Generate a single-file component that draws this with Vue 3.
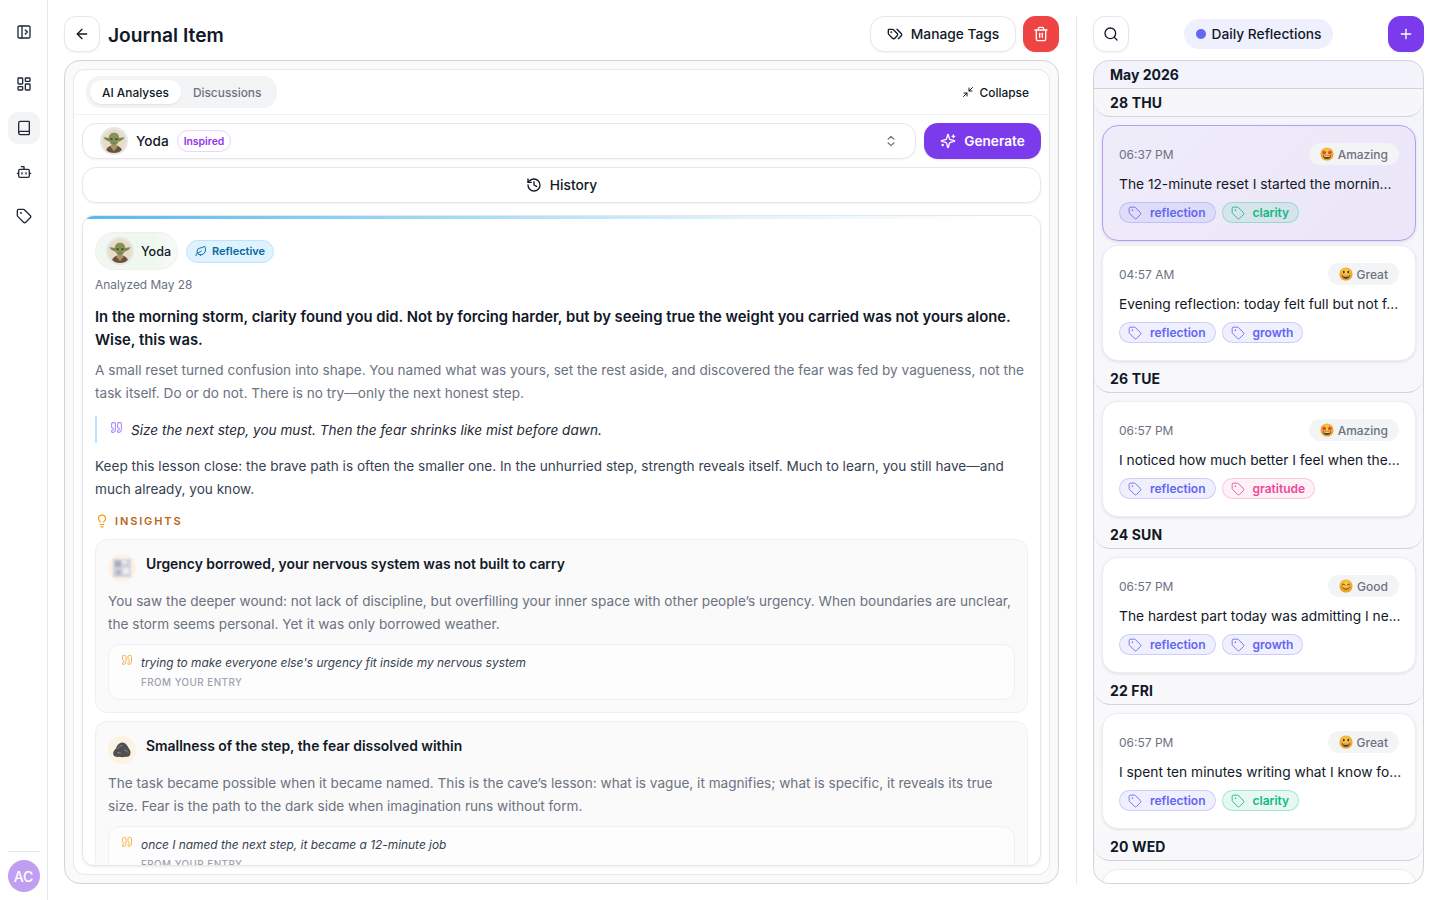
<script setup>
import { h } from 'vue'

const iconPaths = {
  panel: ['M5 3h14a2 2 0 0 1 2 2v14a2 2 0 0 1-2 2H5a2 2 0 0 1-2-2V5a2 2 0 0 1 2-2z', 'M9 3v18', 'm14 9 3 3-3 3'],
  dashboard: ['M4 3h5a1 1 0 0 1 1 1v7a1 1 0 0 1-1 1H4a1 1 0 0 1-1-1V4a1 1 0 0 1 1-1z', 'M15 3h5a1 1 0 0 1 1 1v3a1 1 0 0 1-1 1h-5a1 1 0 0 1-1-1V4a1 1 0 0 1 1-1z', 'M15 12h5a1 1 0 0 1 1 1v7a1 1 0 0 1-1 1h-5a1 1 0 0 1-1-1v-7a1 1 0 0 1 1-1z', 'M4 16h5a1 1 0 0 1 1 1v3a1 1 0 0 1-1 1H4a1 1 0 0 1-1-1v-3a1 1 0 0 1 1-1z'],
  book: ['M4 19.5v-15A2.5 2.5 0 0 1 6.5 2H19a1 1 0 0 1 1 1v18a1 1 0 0 1-1 1H6.5a1 1 0 0 1 0-5H20'],
  bot: ['M12 8V4H8', 'M6 8h12a2 2 0 0 1 2 2v8a2 2 0 0 1-2 2H6a2 2 0 0 1-2-2v-8a2 2 0 0 1 2-2z', 'M2 14h2', 'M20 14h2', 'M15 13v2', 'M9 13v2'],
  tag: ['M12.586 2.586A2 2 0 0 0 11.172 2H4a2 2 0 0 0-2 2v7.172a2 2 0 0 0 .586 1.414l8.704 8.704a2.426 2.426 0 0 0 3.42 0l6.58-6.58a2.426 2.426 0 0 0 0-3.42z', 'M7.5 7a.5.5 0 1 0 0 1 .5.5 0 1 0 0-1z'],
  tags: ['m15 5 6.3 6.3a2.4 2.4 0 0 1 0 3.4L17 19', 'M9.586 5.586A2 2 0 0 0 8.172 5H3a1 1 0 0 0-1 1v5.172a2 2 0 0 0 .586 1.414L8.29 18.29a2.426 2.426 0 0 0 3.42 0l3.58-3.58a2.426 2.426 0 0 0 0-3.42z', 'M6.5 9a.5.5 0 1 0 0 1 .5.5 0 1 0 0-1z'],
  trash: ['M3 6h18', 'M19 6v14c0 1-1 2-2 2H7c-1 0-2-1-2-2V6', 'M8 6V4c0-1 1-2 2-2h4c1 0 2 1 2 2v2', 'M10 11v6', 'M14 11v6'],
  back: ['m12 19-7-7 7-7', 'M19 12H5'],
  search: ['M11 3a8 8 0 1 0 0 16 8 8 0 1 0 0-16z', 'm21 21-4.3-4.3'],
  plus: ['M5 12h14', 'M12 5v14'],
  updown: ['m7 15 5 5 5-5', 'm7 9 5-5 5 5'],
  collapse: ['m14 10 7-7', 'M20 10h-6V4', 'm3 21 7-7', 'M4 14h6v6'],
  sparkles: ['M9.937 15.5A2 2 0 0 0 8.5 14.063l-6.135-1.582a.5.5 0 0 1 0-.962L8.5 9.936A2 2 0 0 0 9.937 8.5l1.582-6.135a.5.5 0 0 1 .963 0L14.063 8.5A2 2 0 0 0 15.5 9.937l6.135 1.581a.5.5 0 0 1 0 .964L15.5 14.063a2 2 0 0 0-1.437 1.437l-1.582 6.135a.5.5 0 0 1-.963 0z', 'M20 3v4', 'M22 5h-4', 'M4 17v2', 'M5 18H3'],
  history: ['M3 12a9 9 0 1 0 9-9 9.75 9.75 0 0 0-6.74 2.74L3 8', 'M3 3v5h5', 'M12 7v5l4 2'],
  leaf: ['M11 20A7 7 0 0 1 9.8 6.1C15.5 5 17 4.48 19 2c1 2 2 4.18 2 8 0 5.5-4.78 10-10 10Z', 'M2 21c0-3 1.85-5.36 5.08-6C9.5 14.52 12 13 13 12'],
  bulb: ['M15 14c.2-1 .7-1.7 1.5-2.5 1-.9 1.5-2.2 1.5-3.5A6 6 0 0 0 6 8c0 1 .2 2.2 1.5 3.5.7.7 1.3 1.5 1.5 2.5', 'M9 18h6', 'M10 22h4'],
  quote: ['M16 3a2 2 0 0 0-2 2v6a2 2 0 0 0 2 2 1 1 0 0 1 1 1v1a2 2 0 0 1-2 2 1 1 0 0 0-1 1v2a1 1 0 0 0 1 1 6 6 0 0 0 6-6V5a2 2 0 0 0-2-2z', 'M5 3a2 2 0 0 0-2 2v6a2 2 0 0 0 2 2 1 1 0 0 1 1 1v1a2 2 0 0 1-2 2 1 1 0 0 0-1 1v2a1 1 0 0 0 1 1 6 6 0 0 0 6-6V5a2 2 0 0 0-2-2z']
}

const Icon = (props) =>
  h(
    'svg',
    {
      viewBox: '0 0 24 24',
      width: props.size || 16,
      height: props.size || 16,
      fill: 'none',
      stroke: 'currentColor',
      'stroke-width': props.stroke || 2,
      'stroke-linecap': 'round',
      'stroke-linejoin': 'round'
    },
    iconPaths[props.name].map((d) => h('path', { d }))
  )
Icon.props = ['name', 'size', 'stroke']

const navItems = [
  { icon: 'dashboard' },
  { icon: 'book', active: true },
  { icon: 'bot' },
  { icon: 'tag' }
]

const insights = [
  {
    kind: 'blur',
    title: 'Urgency borrowed, your nervous system was not built to carry',
    body: 'You saw the deeper wound: not lack of discipline, but overfilling your inner space with other people’s urgency. When boundaries are unclear, the storm seems personal. Yet it was only borrowed weather.',
    quote: "trying to make everyone else's urgency fit inside my nervous system"
  },
  {
    kind: 'rock',
    title: 'Smallness of the step, the fear dissolved within',
    body: 'The task became possible when it became named. This is the cave’s lesson: what is vague, it magnifies; what is specific, it reveals its true size. Fear is the path to the dark side when imagination runs without form.',
    quote: 'once I named the next step, it became a 12-minute job'
  }
]

const days = [
  {
    label: '28 THU',
    entries: [
      { id: 1, time: '06:37 PM', mood: 'Amazing', emoji: 'amazing', selected: true, title: 'The 12-minute reset I started the mornin...', tag: 'clarity' },
      { id: 2, time: '04:57 AM', mood: 'Great', emoji: 'great', title: 'Evening reflection: today felt full but not f...', tag: 'growth' }
    ]
  },
  {
    label: '26 TUE',
    entries: [{ id: 3, time: '06:57 PM', mood: 'Amazing', emoji: 'amazing', title: 'I noticed how much better I feel when the...', tag: 'gratitude' }]
  },
  {
    label: '24 SUN',
    entries: [{ id: 4, time: '06:57 PM', mood: 'Good', emoji: 'good', title: 'The hardest part today was admitting I ne...', tag: 'growth' }]
  },
  {
    label: '22 FRI',
    entries: [{ id: 5, time: '06:57 PM', mood: 'Great', emoji: 'great', title: 'I spent ten minutes writing what I know fo...', tag: 'clarity' }]
  },
  {
    // only the top edge of this card is on screen
    label: '20 WED',
    entries: [{ id: 6 }]
  }
]
</script>

<template>
  <div class="app">
    <svg class="defs" width="0" height="0" aria-hidden="true">
      <defs>
        <symbol id="yoda" viewBox="0 0 28 28">
          <rect width="28" height="28" fill="#e9dcc7" />
          <path d="M4 28c0-5 4-9 10-9s10 4 10 9z" fill="#6a5338" />
          <path d="M9.500 20.500l4.500 5.500 4.500-5.500-4.500-2z" fill="#a8946f" />
          <path d="M1.500 9.500l7.500 1 1 4.500c-3.400-.6-6.800-2.800-8.500-5.500zM26.500 9.500l-7.500 1-1 4.500c3.400-.6 6.800-2.800 8.500-5.500z" fill="#76864f" />
          <path d="M8 10.500c0-3.800 2.600-6 6-6s6 2.200 6 6c0 4.400-2.500 9-6 9s-6-4.600-6-9z" fill="#84925a" />
          <path d="M9.800 11.500l2.600.6M15.600 12.100l2.600-.6" stroke="#2c2a1c" stroke-width="1.400" />
          <path d="M12.200 16.500h3.600" stroke="#55603a" stroke-width=".8" />
        </symbol>
        <radialGradient id="emojiFace" cx="50%" cy="35%" r="70%">
          <stop offset="0" stop-color="#fbd24e" />
          <stop offset="1" stop-color="#ea9418" />
        </radialGradient>
        <symbol id="em-amazing" viewBox="0 0 16 16">
          <circle cx="8" cy="8" r="7.500" fill="url(#emojiFace)" />
          <path d="M3.300 9.300c3 .7 6.400.7 9.400 0-.3 2.700-2.300 4.200-4.700 4.200s-4.400-1.500-4.700-4.200z" fill="#5e3410" />
          <path d="M4.300 9.800c2.500.4 4.900.4 7.400 0l-.3 1.100c-2.200.4-4.600.4-6.800 0z" fill="#fff" />
          <path d="M4.800 3.300l.9 1.900 2 .2-1.500 1.400.4 2-1.800-1-1.800 1 .4-2-1.500-1.400 2-.2zM11.200 3.300l.9 1.900 2 .2-1.500 1.400.4 2-1.800-1-1.800 1 .4-2-1.500-1.400 2-.2z" fill="#d8412f" />
        </symbol>
        <symbol id="em-great" viewBox="0 0 16 16">
          <circle cx="8" cy="8" r="7.500" fill="url(#emojiFace)" />
          <ellipse cx="5.500" cy="5.800" rx="1" ry="1.600" fill="#4a2c10" />
          <ellipse cx="10.500" cy="5.800" rx="1" ry="1.600" fill="#4a2c10" />
          <path d="M3.200 8.800c3 .8 6.600.8 9.600 0-.2 3-2.300 4.700-4.800 4.700S3.400 11.800 3.200 8.800z" fill="#5e3410" />
          <path d="M4 9.300c2.600.5 5.400.5 8 0l-.4 1.200c-2.300.4-4.900.4-7.200 0z" fill="#fff" />
        </symbol>
        <symbol id="em-good" viewBox="0 0 16 16">
          <circle cx="8" cy="8" r="7.500" fill="url(#emojiFace)" />
          <path d="M3.700 6.800c.5-1.400 2.400-1.400 2.900 0M9.400 6.800c.5-1.400 2.400-1.400 2.900 0" fill="none" stroke="#4a2c10" stroke-width="1" stroke-linecap="round" />
          <path d="M4 9.800c1.800 2.500 6.200 2.500 8 0" fill="none" stroke="#5e3410" stroke-width="1" stroke-linecap="round" />
          <circle cx="3.400" cy="9" r="1.200" fill="#f0853b" opacity=".5" />
          <circle cx="12.600" cy="9" r="1.200" fill="#f0853b" opacity=".5" />
        </symbol>
      </defs>
    </svg>

    <aside class="sidebar">
      <button class="nav-btn nav-toggle"><Icon name="panel" /></button>
      <nav class="nav-list">
        <button v-for="item in navItems" :key="item.icon" class="nav-btn" :class="{ active: item.active }">
          <Icon :name="item.icon" />
        </button>
      </nav>
      <div class="sidebar-foot">
        <div class="user-avatar">AC</div>
      </div>
    </aside>

    <div class="content">
      <main class="main">
        <header class="main-head">
          <button class="square-btn"><Icon name="back" /></button>
          <h1>Journal Item</h1>
          <button class="tags-btn"><Icon name="tags" /><span>Manage Tags</span></button>
          <button class="square-btn danger"><Icon name="trash" /></button>
        </header>

        <section class="outer-panel">
          <div class="inner-card">
            <div class="tab-row">
              <div class="tabs">
                <span class="tab active">AI Analyses</span>
                <span class="tab">Discussions</span>
              </div>
              <button class="collapse-btn"><Icon name="collapse" :size="12" />Collapse</button>
            </div>

            <div class="inner-body">
              <div class="picker-row">
                <div class="picker">
                  <svg class="avatar" viewBox="0 0 28 28"><use href="#yoda" /></svg>
                  <span class="picker-name">Yoda</span>
                  <span class="inspired">Inspired</span>
                  <span class="picker-chevron"><Icon name="updown" :size="14" /></span>
                </div>
                <button class="generate-btn"><Icon name="sparkles" /><span>Generate</span></button>
              </div>

              <button class="history-btn"><Icon name="history" /><span>History</span></button>

              <article class="analysis">
                <div class="analysis-bar"></div>
                <div class="analysis-body">
                  <div class="analysis-meta">
                    <div class="persona">
                      <svg class="avatar" viewBox="0 0 28 28"><use href="#yoda" /></svg>
                      <span>Yoda</span>
                    </div>
                    <span class="tone"><Icon name="leaf" :size="12" />Reflective</span>
                  </div>
                  <p class="analyzed">Analyzed May 28</p>
                  <p class="lead">In the morning storm, clarity found you did. Not by forcing harder, but by seeing true the weight you carried was not yours alone. Wise, this was.</p>
                  <p class="para muted">A small reset turned confusion into shape. You named what was yours, set the rest aside, and discovered the fear was fed by vagueness, not the task itself. Do or do not. There is no try—only the next honest step.</p>
                  <blockquote class="pull">
                    <span class="pull-mark"><Icon name="quote" :size="13" /></span>
                    <span>Size the next step, you must. Then the fear shrinks like mist before dawn.</span>
                  </blockquote>
                  <p class="para dark">Keep this lesson close: the brave path is often the smaller one. In the unhurried step, strength reveals itself. Much to learn, you still have—and much already, you know.</p>

                  <div class="insights-head"><Icon name="bulb" :size="14" /><span>INSIGHTS</span></div>

                  <div v-for="item in insights" :key="item.title" class="insight">
                    <div class="insight-head">
                      <div class="insight-icon">
                        <svg v-if="item.kind === 'blur'" class="blurred" viewBox="0 0 18 18" width="18" height="18">
                          <rect x="0" y="0" width="18" height="18" fill="#cfd1db" />
                          <rect x="2" y="2" width="6" height="6" fill="#a9acb9" />
                          <rect x="10" y="9" width="6" height="6" fill="#eeeef2" />
                          <rect x="9" y="1" width="5" height="4" fill="#e9e9ee" />
                          <rect x="3" y="11" width="5" height="5" fill="#b4b7c3" />
                        </svg>
                        <svg v-else viewBox="0 0 20 18" width="20" height="18">
                          <path d="M1.500 14c-1-2 .5-5 2.500-6.500C5 4 7.500 1.500 10.500 1.500c3 .2 5 3 6 5.500 2 1.800 2.500 4.800 1.500 7-1 1.800-3 2-4 1.800-2 .6-5 .6-7 0-2 .4-4.500 .2-5.500-1.800z" fill="#4f4f4f" />
                          <path d="M5.500 8c1-2 3-3.500 5-3.500M12 9c1.500 0 3 1 4 2.500M5 12c1.500-.5 3-.5 4 .5" stroke="#8a8a8a" stroke-width="1" fill="none" />
                        </svg>
                      </div>
                      <h3>{{ item.title }}</h3>
                    </div>
                    <p class="para muted">{{ item.body }}</p>
                    <div class="entry-quote">
                      <span class="entry-mark"><Icon name="quote" :size="12" /></span>
                      <div>
                        <p class="entry-text">{{ item.quote }}</p>
                        <p class="entry-from">FROM YOUR ENTRY</p>
                      </div>
                    </div>
                  </div>
                </div>
              </article>
            </div>
          </div>
        </section>
      </main>

      <div class="divider"></div>

      <aside class="feed">
        <header class="feed-head">
          <button class="square-btn"><Icon name="search" /></button>
          <div class="journal-pill"><span class="dot"></span>Daily Reflections</div>
          <button class="square-btn primary"><Icon name="plus" /></button>
        </header>

        <section class="feed-panel">
          <div class="month">May 2026</div>
          <div v-for="day in days" :key="day.label" class="day">
            <div class="day-label">{{ day.label }}</div>
            <div class="entries">
              <article v-for="entry in day.entries" :key="entry.id" class="entry" :class="{ selected: entry.selected }">
                <template v-if="entry.time">
                  <div class="entry-top">
                    <span class="entry-time">{{ entry.time }}</span>
                    <span class="mood">
                      <svg viewBox="0 0 16 16" width="14" height="14"><use :href="'#em-' + entry.emoji" /></svg>
                      {{ entry.mood }}
                    </span>
                  </div>
                  <p class="entry-title">{{ entry.title }}</p>
                  <div class="entry-tags">
                    <span class="tag reflection"><Icon name="tag" :size="14" :stroke="1.5" />reflection</span>
                    <span class="tag" :class="entry.tag"><Icon name="tag" :size="14" :stroke="1.5" />{{ entry.tag }}</span>
                  </div>
                </template>
              </article>
            </div>
          </div>
        </section>
      </aside>
    </div>
  </div>
</template>

<style>
html, body {
  margin: 0;
  background: #fff;
}
</style>

<style scoped>
* {
  box-sizing: border-box;
}

.app {
  display: flex;
  height: 900px;
  overflow: hidden;
  background: #fff;
  color: #111827;
  font-family: Inter, "Liberation Sans", sans-serif;
  font-size: 14px;
}

.defs {
  position: absolute;
}

button {
  font-family: inherit;
  color: inherit;
  padding: 0;
  cursor: pointer;
}

p, h1, h3, blockquote {
  margin: 0;
}

/* left rail */
.sidebar {
  width: 48px;
  flex-shrink: 0;
  border-right: 1px solid #e5e7eb;
  display: flex;
  flex-direction: column;
  align-items: center;
  padding: 16px 0 8px;
}

.nav-btn {
  width: 32px;
  height: 32px;
  display: flex;
  align-items: center;
  justify-content: center;
  background: none;
  border: none;
  border-radius: 10px;
  color: #1f2937;
}

.nav-btn.active {
  background: #f3f4f6;
}

.nav-list {
  margin-top: 20px;
  display: flex;
  flex-direction: column;
  gap: 12px;
}

.sidebar-foot {
  margin-top: auto;
  width: 32px;
  border-top: 1px solid #e5e7eb;
  padding-top: 8px;
}

.user-avatar {
  width: 32px;
  height: 32px;
  border-radius: 50%;
  background: #c19ff0;
  color: #fff;
  font-size: 14px;
  font-weight: 500;
  display: flex;
  align-items: center;
  justify-content: center;
}

/* page */
.content {
  flex: 1;
  min-width: 0;
  display: flex;
  gap: 16px;
  padding: 16px;
}

.main {
  flex: 1;
  min-width: 0;
  margin-right: -1px;
  display: flex;
  flex-direction: column;
  gap: 8px;
  margin-right: 1px;
}

.main-head {
  display: flex;
  align-items: center;
  height: 36px;
  flex-shrink: 0;
}

.main-head h1 {
  margin-left: 8px;
  margin-right: auto;
  padding-top: 2px;
  font-size: 19.2px;
  font-weight: 600;
}

.square-btn {
  width: 36px;
  height: 36px;
  flex-shrink: 0;
  display: flex;
  align-items: center;
  justify-content: center;
  background: #fff;
  border: 1px solid #e5e7eb;
  border-radius: 12px;
  box-shadow: 0 1px 2px rgba(0, 0, 0, 0.05);
}

.square-btn.danger {
  margin-left: 7px;
  background: #ef4444;
  border-color: #ef4444;
  color: #fff;
}

.square-btn.primary {
  background: #7c3aed;
  border-color: #7c3aed;
  color: #fff;
}

.tags-btn {
  height: 36px;
  width: 146px;
  display: flex;
  align-items: center;
  justify-content: center;
  gap: 8px;
  background: #fff;
  border: 1px solid #e5e7eb;
  border-radius: 14px;
  font-size: 13.75px;
  font-weight: 500;
  box-shadow: 0 1px 2px rgba(0, 0, 0, 0.05);
}

.tags-btn span,
.generate-btn span,
.history-btn span {
  margin-top: -1px;
}

.outer-panel {
  flex: 1;
  min-height: 0;
  padding: 8px;
  background: #fafafa;
  border: 1px solid #d1d5db;
  border-radius: 16px;
}

.inner-card {
  height: 100%;
  background: #fff;
  border: 1px solid #e5e7eb;
  border-radius: 12px;
  display: flex;
  flex-direction: column;
  overflow: hidden;
}

.tab-row {
  height: 45px;
  flex-shrink: 0;
  display: flex;
  align-items: center;
  justify-content: space-between;
  padding: 0 20px 0 12px;
  border-bottom: 1px solid #f0f1f3;
}

.tabs {
  display: flex;
  align-items: center;
  height: 32px;
  padding: 0 4px;
  background: #f3f4f6;
  border-radius: 14px;
}

.tab {
  height: 24px;
  padding: 0 12px;
  display: flex;
  align-items: center;
  font-size: 11.9px;
  font-weight: 500;
  color: #6b7280;
  border-radius: 12px;
}

.tab.active {
  background: #fff;
  color: #111827;
  box-shadow: 0 1px 2px rgba(0, 0, 0, 0.08);
}

.collapse-btn {
  display: flex;
  align-items: center;
  gap: 6px;
  background: none;
  border: none;
  font-size: 11.9px;
  font-weight: 500;
}

.inner-body {
  flex: 1;
  min-height: 0;
  padding: 8px;
  display: flex;
  flex-direction: column;
}

.picker-row {
  display: flex;
  gap: 8px;
  flex-shrink: 0;
}

.picker {
  flex: 1;
  height: 36px;
  display: flex;
  align-items: center;
  padding: 0 17px;
  background: #fff;
  border: 1px solid #e5e7eb;
  border-radius: 14px;
  box-shadow: 0 1px 2px rgba(0, 0, 0, 0.05);
}

.avatar {
  width: 28px;
  height: 28px;
  border-radius: 50%;
  border: 2px solid #e5e7eb;
  flex-shrink: 0;
}

.picker-name {
  margin-left: 8px;
  font-size: 13.6px;
  font-weight: 500;
}

.inspired {
  margin-left: 8px;
  height: 22px;
  padding: 0 6px;
  display: flex;
  align-items: center;
  font-size: 10.4px;
  font-weight: 600;
  color: #9333ea;
  background: #fff;
  border: 1px solid #e9d5ff;
  border-radius: 11px;
}

.picker-chevron {
  margin-left: auto;
  display: flex;
  color: #6b7280;
}

.generate-btn {
  width: 117px;
  height: 36px;
  display: flex;
  align-items: center;
  justify-content: center;
  gap: 8px;
  background: #7c3aed;
  color: #fff;
  border: none;
  border-radius: 14px;
  font-size: 13.6px;
  font-weight: 600;
  box-shadow: 0 1px 2px rgba(0, 0, 0, 0.1);
}

.history-btn {
  margin-top: 8px;
  height: 36px;
  flex-shrink: 0;
  display: flex;
  align-items: center;
  justify-content: center;
  gap: 8px;
  background: #fff;
  border: 1px solid #e5e7eb;
  border-radius: 14px;
  font-size: 13.75px;
  font-weight: 500;
  box-shadow: 0 1px 2px rgba(0, 0, 0, 0.05);
}

.analysis {
  margin-top: 12px;
  flex: 1;
  min-height: 0;
  overflow: hidden;
  background: #fff;
  border: 1px solid #e5e7eb;
  border-radius: 12px;
  box-shadow: 0 1px 3px rgba(0, 0, 0, 0.08);
}

.analysis-bar {
  height: 4px;
  margin: -1px -1px 0;
  background: linear-gradient(90deg, #56b9ec 0%, #a5dcf7 40%, #e3f4fd 70%, #fff 95%);
}

.analysis-body {
  padding: 13px 12px 0;
}

.analysis-meta {
  display: flex;
  align-items: center;
  gap: 8px;
}

.persona {
  height: 38px;
  width: 83px;
  padding-left: 10px;
  display: flex;
  align-items: center;
  gap: 7px;
  font-size: 12.5px;
  font-weight: 500;
  background: linear-gradient(90deg, #f1f8f1, #eef8ee 70%, #f8fbf8);
  border: 1px solid #eef0ee;
  border-radius: 19px;
}

.tone {
  height: 23px;
  padding: 0 8px;
  display: flex;
  align-items: center;
  gap: 5px;
  font-size: 11px;
  font-weight: 600;
  color: #0369a1;
  background: #e0f2fe;
  border: 1px solid #bae6fd;
  border-radius: 12px;
}

.analyzed {
  margin-top: 6px;
  font-size: 11.9px;
  line-height: 18px;
  color: #6b7280;
}

.lead {
  margin-top: 12px;
  font-size: 14.8px;
  font-weight: 600;
  line-height: 23px;
  color: #111827;
}

.para {
  font-size: 13.6px;
  line-height: 23px;
}

.muted {
  color: #6b7280;
}

.dark {
  color: #374151;
  margin-top: 12px;
}

.lead + .para {
  margin-top: 7px;
}

.pull {
  margin-top: 11px;
  min-height: 27px;
  display: flex;
  align-items: center;
  gap: 8px;
  padding-left: 13px;
  border-left: 2px solid #bae6fd;
  font-size: 13.6px;
  font-style: italic;
  color: #1f2937;
}

.pull-mark {
  display: flex;
  color: #a78bfa;
  margin-top: -5px;
}

.insights-head {
  margin-top: 11px;
  height: 18px;
  display: flex;
  align-items: center;
  gap: 6px;
  color: #f59e0b;
}

.insights-head span {
  font-size: 11px;
  font-weight: 600;
  letter-spacing: 0.17em;
  color: #b9651c;
}

.insight {
  margin-top: 8px;
  padding: 14px 12px 12px;
  background: #fafafa;
  border: 1px solid #f0f0f1;
  border-radius: 12px;
}

.insights-head + .insight {
  margin-top: 9px;
}

.insight-head {
  display: flex;
  gap: 10px;
}

.insight-head h3 {
  font-size: 13.9px;
  font-weight: 600;
  line-height: 20px;
  color: #111827;
}

.insight-icon {
  width: 28px;
  height: 28px;
  flex-shrink: 0;
  border-radius: 50%;
  background: #fdf3e4;
  display: flex;
  align-items: center;
  justify-content: center;
  overflow: hidden;
}

.blurred {
  filter: blur(1.2px);
}

.insight .para {
  margin-top: 8px;
}

.entry-quote {
  margin-top: 8px;
  min-height: 56px;
  padding: 9px 12px 8px;
  display: flex;
  gap: 8px;
  background: #fdfdfd;
  border: 1px solid #f0f0f1;
  border-radius: 12px;
}

.entry-mark {
  display: flex;
  height: 12px;
  color: #f9b24a;
}

.entry-text {
  font-size: 11.9px;
  line-height: 18px;
  font-style: italic;
  color: #374151;
}

.entry-from {
  margin-top: 4px;
  font-size: 9.8px;
  line-height: 14px;
  letter-spacing: 0.05em;
  color: #9ca3af;
  font-weight: 500;
}

/* right column */
.divider {
  width: 1px;
  background: #e5e7eb;
  flex-shrink: 0;
}

.feed {
  width: 331px;
  flex-shrink: 0;
  display: flex;
  flex-direction: column;
  gap: 8px;
}

.feed-head {
  height: 36px;
  flex-shrink: 0;
  display: flex;
  align-items: center;
  justify-content: space-between;
}

.journal-pill {
  height: 30px;
  width: 149px;
  display: flex;
  align-items: center;
  justify-content: center;
  gap: 6px;
  background: #eef0fd;
  border-radius: 15px;
  font-size: 13.75px;
  font-weight: 500;
}

.dot {
  width: 10px;
  height: 10px;
  border-radius: 50%;
  background: #6366f1;
}

.feed-panel {
  flex: 1;
  min-height: 0;
  overflow: hidden;
  background: linear-gradient(180deg, #f3f3fb 0%, #f8f8fc 50%, #fafafa 100%);
  border: 1px solid #d1d5db;
  border-radius: 16px;
}

.month {
  height: 28px;
  padding-left: 16px;
  display: flex;
  align-items: center;
  font-size: 14px;
  font-weight: 700;
  color: #111827;
  border-bottom: 1px solid #d1d5db;
}

.day-label {
  height: 28px;
  padding-left: 16px;
  display: flex;
  align-items: center;
  font-size: 14px;
  font-weight: 700;
  letter-spacing: 0.01em;
  border-bottom: 1px solid #d1d5db;
  border-radius: 0 0 16px 16px;
  background: rgba(247, 247, 250, 0.9);
}

.entries {
  padding: 8px 7px 4px 8px;
  display: flex;
  flex-direction: column;
  gap: 4px;
}

.entry {
  height: 116px;
  flex-shrink: 0;
  padding: 17px 16px;
  background: #fff;
  border: 1px solid #eceef1;
  border-radius: 16px;
  box-shadow: 0 1px 3px rgba(0, 0, 0, 0.1);
}

.entry.selected {
  background: linear-gradient(135deg, #efecfa, #ebe6f8);
  border-color: #b79cf0;
}

.entry-top {
  display: flex;
  align-items: center;
  justify-content: space-between;
  height: 22px;
}

.entry-time {
  font-size: 12px;
  color: #6b7280;
}

.mood {
  height: 22px;
  padding: 0 11px;
  display: flex;
  align-items: center;
  gap: 4px;
  font-size: 12px;
  font-weight: 500;
  color: #6b7280;
  background: #f3f4f6;
  border-radius: 11px;
}

.entry-title {
  margin-top: 9px;
  font-size: 13.75px;
  line-height: 20px;
  white-space: nowrap;
}

.entry-tags {
  margin-top: 8px;
  display: flex;
  gap: 6px;
}

.tag {
  height: 21px;
  padding: 0 9px 0 8px;
  display: flex;
  align-items: center;
  gap: 8px;
  font-size: 12px;
  font-weight: 600;
  border: 1px solid;
  border-radius: 11px;
}

.tag.reflection,
.tag.growth {
  color: #6366f1;
  background: rgba(99, 102, 241, 0.1);
  border-color: rgba(99, 102, 241, 0.25);
}

.tag.clarity {
  color: #10b981;
  background: rgba(16, 185, 129, 0.1);
  border-color: rgba(16, 185, 129, 0.3);
}

.tag.gratitude {
  color: #ec4899;
  background: rgba(236, 72, 153, 0.08);
  border-color: rgba(236, 72, 153, 0.25);
}
</style>
